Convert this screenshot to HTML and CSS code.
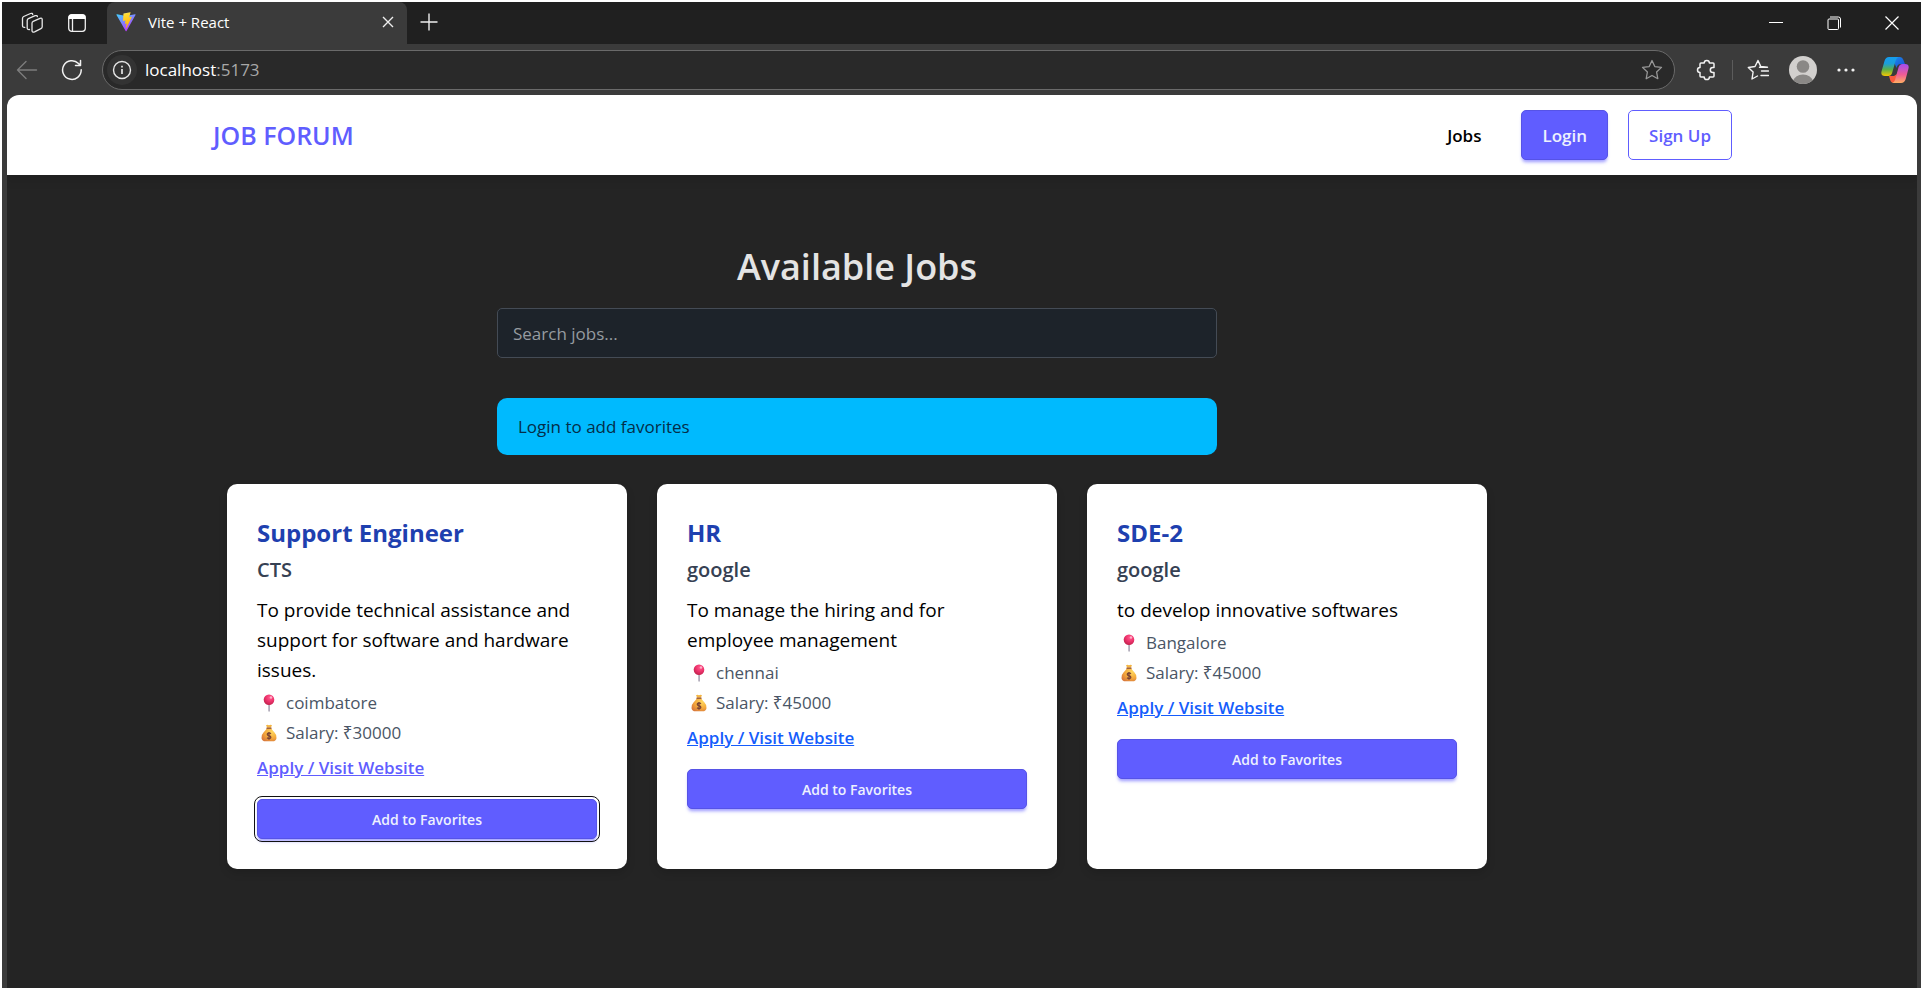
FILE: index.html
```html
<!DOCTYPE html>
<html lang="en">
<head>
<meta charset="utf-8">
<title>Vite + React</title>
<link rel="stylesheet" href="styles.css">
</head>
<body>
<svg class="sprite" width="0" height="0" aria-hidden="true">
  <defs>
    <radialGradient id="pg" cx=".6" cy=".3" r=".7"><stop stop-color="#ff5f90"/><stop offset=".5" stop-color="#f0356f"/><stop offset="1" stop-color="#c4234f"/></radialGradient>
    <radialGradient id="bg" cx=".7" cy=".3" r=".8"><stop stop-color="#ffd75e"/><stop offset=".6" stop-color="#f3a73c"/><stop offset="1" stop-color="#d97a3c"/></radialGradient>
    <symbol id="pin" viewBox="0 0 18 18"><path d="M8.300 9h1.600v8.200q-.8.900-1.600 0z" fill="#aaa4b4"/><circle cx="9" cy="5.700" r="5.300" fill="url(#pg)"/><circle cx="11" cy="3.500" r="1.200" fill="#ffb0c8"/></symbol>
    <symbol id="bag" viewBox="0 0 18 18"><path d="M6 1.200q1.500-.8 3 0 1.500-.8 3 0l-1.200 2.600H7.200z" fill="#f4b544"/><path d="M7 4h4q1 2 3.500 4.500Q17 11 16.500 14.200 16 17.300 12.500 17.300h-7Q2 17.300 1.500 14.200 1 11 3.500 8.500 6 6 7 4" fill="url(#bg)"/><path d="M6.500 3.500h5v1.400h-5z" fill="#9a5b3c"/><path d="M11 9.700Q9 8.300 7.500 9.500 6.700 11 9 11.700q2.300.6 1.600 2.200-1.600 1.200-3.600-.2M9 8v7.700" fill="none" stroke="#7a4334" stroke-width="1.300"/></symbol>
  </defs>
</svg>
<div class="browser">
  <header class="tabstrip">
    <div class="strip-tools">
      <button class="icon-btn" aria-label="Workspaces"><svg width="24" height="24" viewBox="0 0 24 24" fill="none" stroke="#e8e8e8" stroke-width="1.300" stroke-linejoin="round" stroke-linecap="round"><path d="M13.200 10.300 20 7.300q2.200-.7 2.200 1.300v7.200q0 1.300-1.300 1.900l-6.300 3.100q-2.600 1-2.600-1.300v-7.300q0-1.400 1.200-1.900"/><path d="M9.500 18.500q-2.300.3-2.300-1.700V9.600q0-1.300 1.200-1.900l6.800-3q2-.6 2.200 1"/><path d="M4.800 16.300q-2.300.3-2.300-1.700V7.400q0-1.300 1.200-1.900l6.800-3q2-.6 2.200 1"/></svg></button>
      <button class="icon-btn" aria-label="Tab actions"><svg width="20" height="20" viewBox="0 0 20 20"><rect x="1.700" y="1.700" width="16.600" height="16.600" rx="3" fill="none" stroke="#f0f0f0" stroke-width="1.300"/><path d="M1.500 6V4.500a3 3 0 0 1 3-3h11a3 3 0 0 1 3 3V6z" fill="#fff"/><path d="M5.500 6v12" stroke="#f0f0f0" stroke-width="1.300"/></svg></button>
    </div>
    <div class="tab">
      <svg width="20" height="20" viewBox="0 0 410 404"><defs><linearGradient id="va" x1="0" y1="0" x2=".6" y2="1"><stop stop-color="#41d1ff"/><stop offset="1" stop-color="#bd34fe"/></linearGradient><linearGradient id="vb" x1=".4" y1="0" x2=".6" y2="1"><stop stop-color="#ffea83"/><stop offset=".1" stop-color="#ffdd35"/><stop offset="1" stop-color="#ffa800"/></linearGradient></defs><path fill="url(#va)" d="m399.600 59.500-184 329c-3.800 6.800-13.500 6.800-17.400.1L10.600 59.600c-4.200-7.400 2.100-16.300 10.500-14.800l184.200 32.900q1.700.3 3.500 0l180.300-32.900c8.400-1.500 14.700 7.300 10.500 14.700"/><path fill="url(#vb)" d="M293 1.600 156.800 28.200a5 5 0 0 0-4 4.600l-8.400 141.500c-.2 3.400 2.900 5.900 6.100 5.200l37.900-8.800c3.600-.8 6.800 2.300 6 5.900l-11.300 55.200c-.7 3.700 2.700 6.900 6.300 5.800l23.500-7.100c3.600-1.100 7.100 2.100 6.300 5.800l-17.900 86.600c-1.100 5.500 6.100 8.400 9.200 3.800l2-3L323.300 103.100c1.900-3.700-1.300-7.900-5.400-7.100l-39 7.500c-3.700.7-6.800-2.700-5.700-6.200l25.400-89c1.100-3.600-2-7-5.600-6.700"/></svg>
      <span class="tab-title">Vite + React</span>
      <button class="icon-btn" aria-label="Close tab"><svg width="12" height="12" viewBox="0 0 12 12" stroke="#eee" stroke-width="1.400"><path d="m1 1 10 10M11 1 1 11"/></svg></button>
    </div>
    <button class="icon-btn new-tab" aria-label="New tab"><svg width="18" height="18" viewBox="0 0 18 18" stroke="#eee" stroke-width="1.400"><path d="M9 .5v17M.5 9h17"/></svg></button>
    <div class="window-buttons">
      <button class="icon-btn" aria-label="Minimize"><svg width="14" height="14" viewBox="0 0 14 14" stroke="#fff"><path d="M0 6.500h14"/></svg></button>
      <button class="icon-btn" aria-label="Restore"><svg width="14" height="14" viewBox="0 0 14 14" fill="none" stroke="#fff"><rect x="1" y="3" width="10.500" height="10.500" rx="1"/><path d="M3 1h8.500a2 2 0 0 1 2 2v8.500"/></svg></button>
      <button class="icon-btn" aria-label="Close"><svg width="14" height="14" viewBox="0 0 14 14" stroke="#fff" stroke-width="1.200"><path d="m.5.5 13 13M13.500.5l-13 13"/></svg></button>
    </div>
  </header>

  <div class="toolbar">
    <button class="icon-btn back" aria-label="Back"><svg width="22" height="20" viewBox="0 0 22 20" fill="none" stroke="#7d7d7d" stroke-width="1.400" stroke-linecap="round" stroke-linejoin="round"><path d="M20.500 10H1.500M10 1.500 1.500 10l8.500 8.500"/></svg></button>
    <button class="icon-btn reload" aria-label="Refresh"><svg width="22" height="22" viewBox="0 0 22 22" fill="none" stroke="#f2f2f2" stroke-width="1.500" stroke-linecap="round" stroke-linejoin="round"><path d="M20.200 10.800A9.300 9.300 0 1 1 17.500 4.500l1.700 1.600M19.500 1.500v5h-5"/></svg></button>
    <div class="address">
      <button class="icon-btn site-info" aria-label="Site information"><svg width="20" height="20" viewBox="0 0 20 20" fill="none" stroke="#e6e6e6" stroke-width="1.400"><circle cx="10" cy="10" r="8.500"/><path d="M10 9v5M10 5.800v1.600" stroke-width="1.700"/></svg></button>
      <span class="url">localhost<span class="port">:5173</span></span>
      <button class="icon-btn" aria-label="Add to favorites bar"><svg width="22" height="22" viewBox="0 0 22 22" fill="none" stroke="#989898" stroke-width="1.300" stroke-linejoin="round"><path d="m11 1.500 2.800 6.100 6.700.8-4.900 4.600 1.200 6.700-5.800-3.200-5.800 3.200 1.200-6.700L1.500 8.400l6.700-.8z"/></svg></button>
    </div>
    <div class="toolbar-actions">
      <button class="icon-btn" aria-label="Extensions"><svg width="22" height="22" viewBox="0 0 22 22" fill="none" stroke="#f2f2f2" stroke-width="1.500" stroke-linejoin="round"><path d="M5 4h3.200a2.600 2.600 0 0 1 5.200 0H17q1 0 1 1v3.500h-1.200a2.500 2.500 0 0 0 0 5H18V17q0 1-1 1h-3.600a2.600 2.600 0 0 1-5.200 0H5q-1 0-1-1v-3.500a2.500 2.500 0 0 1 0-5V5q0-1 1-1z"/></svg></button>
      <span class="divider"></span>
      <button class="icon-btn" aria-label="Favorites"><svg width="22" height="22" viewBox="0 0 22 22" fill="none" stroke="#f2f2f2" stroke-width="1.400" stroke-linejoin="round" stroke-linecap="round"><path d="M20.500 8.200 13.700 7.400 11 1.500 8 7.500l-6.700 1 4.800 4.600L5 20l5.500-3M14.500 12h7M12.500 8.200h8M14 16.500h7.500"/></svg></button>
      <button class="icon-btn" aria-label="Profile"><svg width="28" height="28" viewBox="0 0 28 28"><defs><clipPath id="av"><circle cx="14" cy="14" r="14"/></clipPath></defs><g clip-path="url(#av)"><path fill="#d2d0ce" d="M0 0h28v28H0z"/><circle cx="14" cy="10.500" r="6.300" fill="#8a8886"/><ellipse cx="14" cy="25" rx="9.500" ry="6.500" fill="#8a8886"/></g></svg></button>
      <button class="icon-btn" aria-label="Settings and more"><svg width="18" height="6" viewBox="0 0 18 6" fill="#f2f2f2"><circle cx="2" cy="3" r="1.600"/><circle cx="9" cy="3" r="1.600"/><circle cx="16" cy="3" r="1.600"/></svg></button>
      <button class="icon-btn copilot" aria-label="Copilot"><svg width="28" height="28" viewBox="0 0 28 28"><defs><linearGradient id="ca" x1="0" y1="0" x2="0" y2="1"><stop stop-color="#159df0"/><stop offset=".35" stop-color="#1c9fd8"/><stop offset=".65" stop-color="#5bb04a"/><stop offset="1" stop-color="#f5c600"/></linearGradient><linearGradient id="cb" x1="0" y1="0" x2="0" y2="1"><stop stop-color="#a24cf0"/><stop offset=".55" stop-color="#ee5b96"/><stop offset="1" stop-color="#ffae62"/></linearGradient><linearGradient id="cc" x1="0" y1="0" x2="1" y2="1"><stop stop-color="#1a8ff0"/><stop offset="1" stop-color="#1b4bd0"/></linearGradient></defs><path fill="url(#cc)" d="M11 1h8q2.500 0 3.300 2.800L24 8h-4.500q-3 0-4 4z"/><path fill="#fb5a3c" d="M8 20h5l3-2-2 9h-1q-3 0-3.800-3z"/><path fill="url(#ca)" d="M8 1h9.500q-2 .5-2.800 3.500l-3.600 12.500q-.8 3-4 3H4q-4.500 0-3.500-4.500L3.500 5Q4.700 1 8 1"/><path fill="url(#cb)" d="M20 27h-9q2.300-.5 3-3l3.500-12.500Q18.500 8 21.500 8H24q4.500 0 3.500 4.500L24.700 23Q23.600 27 20 27"/></svg></button>
    </div>
  </div>

  <div class="page">
    <nav class="navbar">
      <div class="nav-inner">
        <a class="brand" href="#">JOB FORUM</a>
        <div class="nav-links">
          <a class="nav-link" href="#jobs">Jobs</a>
          <button class="btn btn-primary">Login</button>
          <button class="btn btn-outline">Sign Up</button>
        </div>
      </div>
    </nav>
    <main class="main">
      <section class="jobs" id="jobs">
        <div class="intro">
          <h1 class="heading">Available Jobs</h1>
          <input class="search" type="text" placeholder="Search jobs..." aria-label="Search jobs">
          <div class="alert" role="alert">Login to add favorites</div>
        </div>
        <div class="cards">
          <article class="card">
            <h2 class="job-title">Support Engineer</h2>
            <h3 class="company">CTS</h3>
            <p class="description">To provide technical assistance and support for software and hardware issues.</p>
            <p class="meta"><svg class="emoji"><use href="#pin"/></svg>coimbatore</p>
            <p class="meta"><svg class="emoji"><use href="#bag"/></svg>Salary: ₹30000</p>
            <a class="apply apply-visited" href="#apply-1">Apply / Visit Website</a>
            <button class="btn btn-primary btn-card btn-focused">Add to Favorites</button>
          </article>
          <article class="card">
            <h2 class="job-title">HR</h2>
            <h3 class="company">google</h3>
            <p class="description">To manage the hiring and for employee management</p>
            <p class="meta"><svg class="emoji"><use href="#pin"/></svg>chennai</p>
            <p class="meta"><svg class="emoji"><use href="#bag"/></svg>Salary: ₹45000</p>
            <a class="apply" href="#apply-2">Apply / Visit Website</a>
            <button class="btn btn-primary btn-card">Add to Favorites</button>
          </article>
          <article class="card">
            <h2 class="job-title">SDE-2</h2>
            <h3 class="company">google</h3>
            <p class="description">to develop innovative softwares</p>
            <p class="meta"><svg class="emoji"><use href="#pin"/></svg>Bangalore</p>
            <p class="meta"><svg class="emoji"><use href="#bag"/></svg>Salary: ₹45000</p>
            <a class="apply" href="#apply-3">Apply / Visit Website</a>
            <button class="btn btn-primary btn-card">Add to Favorites</button>
          </article>
        </div>
      </section>
    </main>
  </div>
</div>
</body>
</html>
```
FILE: styles.css
```css
* { box-sizing: border-box; }
body {
  margin: 0;
  background: #fff;
  font-family: "Open Sans", "Noto Sans", sans-serif;
  font-size: 17px;
}
button { font-family: inherit; cursor: pointer; }
h1, h2, h3, p { margin: 0; }
a { text-decoration: none; }
svg { display: block; }
.sprite { position: absolute; }

.browser {
  display: flex;
  flex-direction: column;
  min-height: 100vh;
  border: 2px solid #fff;
  background: #3b3b3b;
}
.icon-btn {
  display: flex;
  align-items: center;
  justify-content: center;
  padding: 0;
  border: 0;
  background: none;
}

.tabstrip {
  display: flex;
  height: 42px;
  background: #202020;
}
.strip-tools {
  display: flex;
  align-items: center;
  gap: 23px;
  width: 105px;
  padding-left: 18px;
}
.tab {
  display: flex;
  align-items: center;
  gap: 12px;
  width: 300px;
  padding: 0 13px 2px 9px;
  border-radius: 8px 8px 0 0;
  background: #3b3b3b;
  color: #fff;
}
.tab-title { flex: 1; font-size: 15px; }
.new-tab { width: 44px; padding-bottom: 2px; }
.window-buttons { display: flex; margin-left: auto; }
.window-buttons .icon-btn { width: 58px; }

.toolbar {
  display: flex;
  align-items: center;
  height: 51px;
  padding: 0 12px 0 14px;
}
.back { width: 22px; }
.reload { width: 22px; margin: 0 19px 0 23px; }
.address {
  display: flex;
  flex: 1;
  align-items: center;
  height: 40px;
  padding: 0 11px 0 4px;
  border: 1px solid #6a6a6a;
  border-radius: 20px;
  background: #292929;
  color: #fff;
}
.site-info { width: 30px; height: 30px; border-radius: 50%; background: #333; }
.url { flex: 1; padding-left: 8px; }
.port { color: #a8a8a8; }
.toolbar-actions { display: flex; align-items: center; padding-left: 21px; gap: 20px; }
.divider { width: 1px; height: 20px; margin: 0 -6px; background: #5c5c5c; }
.copilot { margin-left: 6px; }

.page {
  flex: 1;
  margin: 0 4px 0 5px;
  border-radius: 12px 12px 0 0;
  background: #242424;
  overflow: hidden;
}
.navbar { background: #fff; box-shadow: 0 4px 10px rgba(0, 0, 0, 0.15); }
.nav-inner {
  display: flex;
  align-items: center;
  justify-content: space-between;
  max-width: 1540px;
  height: 80px;
  margin: 0 auto;
  padding-left: 21px;
}
.brand { color: #605dff; font-size: 25px; font-weight: 600; }
.nav-links { display: flex; align-items: center; gap: 20px; }
.nav-link { padding: 0 20px; color: #000; font-weight: 600; }

.btn {
  height: 50px;
  padding: 0 20px;
  border: 1px solid #605dff;
  border-radius: 5px;
  font-size: 17px;
  font-weight: 600;
}
.btn-primary {
  border-color: #5653e6;
  background: #605dff;
  box-shadow: 0 3px 3px -1px rgba(96, 93, 255, 0.4), 0 4px 4px -2px rgba(96, 93, 255, 0.3);
  color: #edf1fe;
}
.btn-outline { background: #fff; color: #605dff; }

.main { max-width: 1540px; margin: 0 auto; padding: 64px 0 64px 35px; }
.jobs { max-width: 1260px; }
.intro { max-width: 720px; margin: 0 auto; }
.heading {
  color: #e4e4e4;
  font-size: 36px;
  font-weight: 600;
  line-height: 56px;
  text-align: center;
}
.search {
  display: block;
  width: 100%;
  height: 50px;
  margin: 13px 0 40px;
  padding: 0 15px;
  border: 1px solid #444b55;
  border-radius: 5px;
  background: #1d232a;
  color: #fff;
  font-family: inherit;
  font-size: 17px;
}
.search::placeholder { color: #969ba0; opacity: 1; }
.alert {
  padding: 14px 21px;
  border-radius: 10px;
  background: #00bafe;
  color: #042e49;
  line-height: 29px;
}

.cards {
  display: grid;
  grid-template-columns: repeat(3, 1fr);
  gap: 30px;
  margin-top: 29px;
}
.card {
  padding: 30px;
  border-radius: 10px;
  background: #fff;
  box-shadow: 0 4px 8px rgba(0, 0, 0, 0.15);
}
.job-title { color: #1e40af; font-size: 24px; font-weight: 700; line-height: 38px; }
.company {
  margin: 3px 0 10px;
  color: #364153;
  font-size: 20px;
  font-weight: 600;
  line-height: 30px;
}
.description { margin-bottom: 3px; color: #000; font-size: 19px; line-height: 30px; }
.meta { display: flex; align-items: center; gap: 8px; color: #4a5565; line-height: 30px; }
.emoji { width: 18px; height: 18px; margin-left: 3px; }
.apply {
  display: block;
  width: fit-content;
  margin-top: 5px;
  color: #155dfc;
  font-weight: 600;
  line-height: 30px;
  text-decoration: underline;
}
.apply-visited { color: #605dff; }
.btn-card { width: 100%; height: 40px; margin-top: 16px; font-size: 14px; }
.btn-focused { outline: 1px solid #111; outline-offset: 2px; }
```
